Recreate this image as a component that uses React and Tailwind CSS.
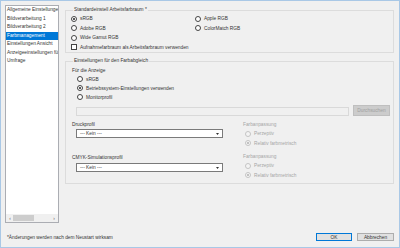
import React from 'react';

const Radio = ({ checked, disabled, label }) => (
  <div className="flex items-center h-[9.5px] gap-[3px] whitespace-nowrap">
    <span
      className={`w-[6px] h-[6px] shrink-0 rounded-full border flex items-center justify-center ${
        disabled ? 'border-[#c4c4c4] bg-[#f4f4f4]' : 'border-[#444444] bg-white'
      }`}
    >
      {checked && (
        <span className={`w-[2px] h-[2px] rounded-full ${disabled ? 'bg-[#b0b0b0]' : 'bg-[#222222]'}`} />
      )}
    </span>
    <span className={disabled ? 'text-[#a6a6a6]' : ''}>{label}</span>
  </div>
);

const Combo = ({ value }) => (
  <div className="ml-[4px] w-[147px] h-[9px] border border-[#7a7a7a] bg-white flex items-center justify-between px-[3px]">
    <span>{value}</span>
    <svg width="3" height="2" viewBox="0 0 3 2">
      <path d="M0 0 L3 0 L1.5 2 Z" fill="#333" />
    </svg>
  </div>
);

const navItems = [
  'Allgemeine Einstellungen',
  'Bildverarbeitung 1',
  'Bildverarbeitung 2',
  'Farbmanagement',
  'Einstellungen Ansicht',
  'Anzeigeeinstellungen für',
  'Umfrage',
];

export default function App() {
  return (
    <div className="w-[400px] h-[248px] bg-[#f0f0f0] border border-[#a9c8e6] flex flex-col text-[4.8px] leading-[9px] text-[#333333] font-['Segoe_UI','Liberation_Sans',Arial,sans-serif] overflow-hidden">
      <div className="flex pt-[4px] pl-[4px] gap-[6px]">
        {/* Navigation list */}
        <div className="w-[54px] h-[218px] border border-[#abadb3] bg-white flex flex-col">
          <div className="flex-1 overflow-hidden">
            {navItems.map((item) => (
              <div
                key={item}
                className={`h-[8.5px] leading-[8.5px] px-[1px] whitespace-nowrap overflow-hidden ${
                  item === 'Farbmanagement' ? 'bg-[#0078d7] text-white' : ''
                }`}
              >
                {item}
              </div>
            ))}
          </div>
          <div className="h-[8px] bg-[#f0f0f0] flex items-center px-[1px] text-[#606060]">
            <span className="w-[6px] text-center">‹</span>
            <span className="w-[21px] h-[6px] bg-[#cdcdcd]" />
            <span className="flex-1" />
            <span className="w-[6px] text-center">›</span>
          </div>
        </div>

        {/* Settings */}
        <div className="w-[329px] flex flex-col">
          <fieldset className="h-[48px] border border-[#dcdcdc] pl-[5px]">
            <legend className="ml-[2px] px-[1px] leading-[10px]">Standardeinstell Arbeitsfarbraum *</legend>
            <div className="-mt-[1px] flex">
              <div className="w-[124px] flex flex-col">
                <Radio checked label="sRGB" />
                <Radio label="Adobe RGB" />
                <Radio label="Wide Gamut RGB" />
                <div className="flex items-center h-[9.5px] gap-[3px] whitespace-nowrap">
                  <span className="w-[6px] h-[6px] border border-[#444444] bg-white" />
                  <span>Aufnahmefarbraum als Arbeitsfarbraum verwenden</span>
                </div>
              </div>
              <div className="flex flex-col">
                <Radio label="Apple RGB" />
                <Radio label="ColorMatch RGB" />
              </div>
            </div>
          </fieldset>

          <fieldset className="mt-[3px] h-[128px] border border-[#dcdcdc] pl-[6px] pr-[2px]">
            <legend className="ml-[1px] px-[1px] leading-[10px]">Einstellungen für den Farbabgleich</legend>
            <div className="-mt-[0.5px] h-[9px]">Für die Anzeige</div>
            <div className="ml-[5px] flex flex-col">
              <div className="h-[9px] flex items-center"><Radio label="sRGB" /></div>
              <div className="h-[9px] flex items-center"><Radio checked label="Betriebssystem-Einstellungen verwenden" /></div>
              <div className="h-[9px] flex items-center"><Radio label="Monitorprofil" /></div>
            </div>
            <div className="mt-[3.5px] flex items-end gap-[4px]">
              <div className="ml-[4px] w-[273px] h-[9px] border border-[#d9d9d9] bg-[#f0f0f0]" />
              <div className="w-[37px] h-[11px] border border-[#bfbfbf] bg-[#cccccc] text-[#a0a0a0] flex items-center justify-center">
                Durchsuchen
              </div>
            </div>
            <div className="mt-[3.5px] flex">
              <div className="w-[171px] flex flex-col">
                <div className="h-[9px]">Druckprofil</div>
                <div className="mt-[0.5px]"><Combo value="--- Kein ---" /></div>
                <div className="mt-[14.5px] h-[9px]">CMYK-Simulationsprofil</div>
                <div className="mt-[1.5px]"><Combo value="--- Kein ---" /></div>
              </div>
              <div className="flex flex-col text-[#a6a6a6]">
                <div className="h-[9.5px] flex items-center">Farbanpassung</div>
                <div className="ml-[2px]">
                  <Radio disabled label="Perzeptiv" />
                  <Radio disabled checked label="Relativ farbmetrisch" />
                </div>
                <div className="mt-[3.5px] h-[9.5px] flex items-center">Farbanpassung</div>
                <div className="ml-[2px]">
                  <Radio disabled label="Perzeptiv" />
                  <Radio disabled checked label="Relativ farbmetrisch" />
                </div>
              </div>
            </div>
          </fieldset>
        </div>
      </div>

      {/* Footer */}
      <div className="flex-1 pt-[4px] pl-[6px] pr-[5px] flex items-center justify-between">
        <span>*Änderungen werden nach dem Neustart wirksam</span>
        <div className="flex gap-[5px]">
          <div className="w-[36px] h-[8px] border border-[#0078d7] bg-[#e1e1e1] flex items-center justify-center">OK</div>
          <div className="w-[37px] h-[8px] border border-[#adadad] bg-[#e1e1e1] flex items-center justify-center">Abbrechen</div>
        </div>
      </div>
    </div>
  );
}
